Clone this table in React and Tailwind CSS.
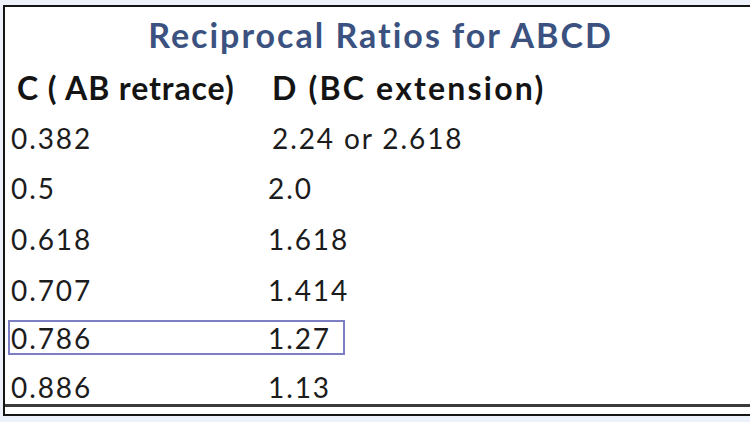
import React from 'react';

const rows = [
  { c: '0.382', d: '2.24 or 2.618', h: 'h-[49px]', dPad: 'pl-[4px]' },
  { c: '0.5', d: '2.0', h: 'h-[51px]', dPad: '' },
  { c: '0.618', d: '1.618', h: 'h-[52px]', dPad: '' },
  { c: '0.707', d: '1.414', h: 'h-[49px]', dPad: '' },
  { c: '0.786', d: '1.27', h: 'h-[47px]', dPad: '', mark: true },
  { c: '0.886', d: '1.13', h: 'h-[43px] pt-[8px]', dPad: '' },
];

export default function App() {
  return (
    <div className="w-[750px] h-[422px] bg-[#edf1fa] pt-[5px] pl-[3px] font-['Lato',sans-serif] text-[#1c1c1c]">
      <div className="h-[411px] bg-white border-t-2 border-l-2 border-b-2 border-[#151515]">
        <div className="h-[400px] border-b-[3px] border-[#3a3a3a]">
          {/* titel */}
          <div className="h-[56px] flex items-center justify-center pl-[6px] pb-[2px]">
            <span className="text-[34px] font-bold tracking-[2px] text-[#3b5280]">
              Reciprocal Ratios for ABCD
            </span>
          </div>

          {/* kolommen */}
          <div className="h-[50px] flex items-center text-[32px] font-bold text-[#141414]">
            <span className="w-[267px] pl-[12px] tracking-[0.9px]">C ( AB retrace)</span>
            <span className="tracking-[2.2px]">D (BC extension)</span>
          </div>

          {rows.map((r) => (
            <div key={r.c} className={`${r.h} flex items-center text-[28px] tracking-[1.9px]`}>
              {r.mark ? (
                <div className="ml-[3px] w-[337px] h-[35px] border-2 border-[#7e7ec2] flex items-center">
                  <span className="w-[258px] pl-[1px]">{r.c}</span>
                  <span>{r.d}</span>
                </div>
              ) : (
                <>
                  <span className="w-[263px] pl-[6px]">{r.c}</span>
                  <span className={r.dPad}>{r.d}</span>
                </>
              )}
            </div>
          ))}
        </div>
      </div>
    </div>
  );
}
